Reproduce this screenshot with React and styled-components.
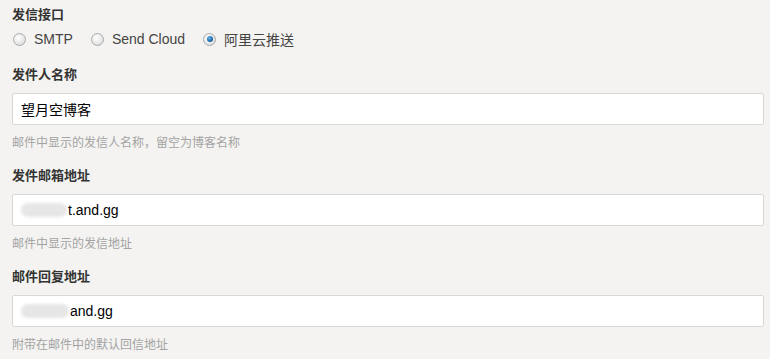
import React from "react";
import styled, { createGlobalStyle } from "styled-components";

const Global = createGlobalStyle`
  html, body { margin: 0; padding: 0; background: #f4f3f1; }
  body { font-family: "Liberation Sans", Arial, "Noto Sans CJK SC", sans-serif; color: #333; }
`

const Page = styled.div`
  padding: 6px 6px 0 12px;
  display: flex;
  flex-direction: column;
`

const Group = styled.div`
  display: flex;
  flex-direction: column;
  margin-bottom: ${p => p.$gap}px;
`

const Label = styled.div`
  font-size: 13px;
  font-weight: bold;
  color: #333;
  line-height: 17px;
  margin-bottom: ${p => p.$tight ? 7 : 10}px;
`

const Radios = styled.div`
  display: flex;
  align-items: center;
  gap: 17px;
  height: 18px;
`

const RadioItem = styled.label`
  display: flex;
  align-items: center;
  gap: 8px;
  font-size: 14px;
  color: #444;
`

const Dot = styled.span`
  width: 11px;
  height: 11px;
  margin-left: 1px;
  border-radius: 50%;
  border: 1px solid #aaa;
  background: radial-gradient(circle at 40% 35%, #fff 0%, #e6e6e6 60%, #cfcfcf 100%);
  display: inline-flex;
  align-items: center;
  justify-content: center;
  &::after {
    content: "";
    display: ${p => p.$on ? "block" : "none"};
    width: 6px;
    height: 6px;
    border-radius: 50%;
    background: radial-gradient(circle at 40% 35%, #6fb3e6 0%, #1f6fb2 55%, #0d3c6e 100%);
  }
`

const Field = styled.div`
  height: 30px;
  border: 1px solid #d9d8d5;
  border-radius: 2px;
  background: #fff;
  display: flex;
  align-items: center;
  padding: 0 8px;
  font-size: 14px;
  color: #000;
`

const Blur = styled.span`
  display: inline-block;
  width: ${p => p.$w}px;
  height: 14px;
  border-radius: 7px;
  background: #e6e6e6;
  filter: blur(1.5px);
  margin-right: 1px;
`

const Help = styled.div`
  font-size: 12px;
  color: #a3a3a3;
  line-height: 16px;
  margin-top: 10px;
`

const App = () => {
  return (
    <Page>
      <Global />
      <Group $gap={18}>
        <Label $tight>发信接口</Label>
        <Radios>
          <RadioItem><Dot />SMTP</RadioItem>
          <RadioItem><Dot />Send Cloud</RadioItem>
          <RadioItem><Dot $on />阿里云推送</RadioItem>
        </Radios>
      </Group>
      <Group $gap={16}>
        <Label>发件人名称</Label>
        <Field>望月空博客</Field>
        <Help>邮件中显示的发信人名称，留空为博客名称</Help>
      </Group>
      <Group $gap={16}>
        <Label>发件邮箱地址</Label>
        <Field><Blur $w={46} />t.and.gg</Field>
        <Help>邮件中显示的发信地址</Help>
      </Group>
      <Group $gap={0}>
        <Label>邮件回复地址</Label>
        <Field><Blur $w={48} />and.gg</Field>
        <Help>附带在邮件中的默认回信地址</Help>
      </Group>
    </Page>
  )
}

export default App;
